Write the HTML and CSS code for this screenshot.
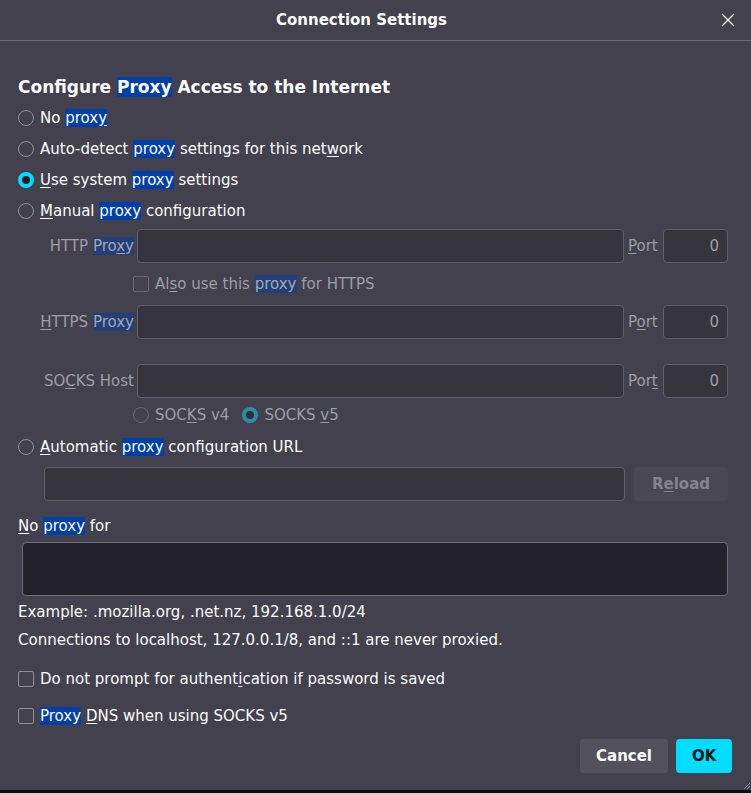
FILE: index.html
```html
<!DOCTYPE html>
<html lang="en">
<head>
<meta charset="utf-8">
<title>Connection Settings</title>
<link rel="stylesheet" href="styles.css">
</head>
<body>
<div class="dialog">
  <header class="titlebar">
    <h1 class="title">Connection Settings</h1>
    <button class="close" aria-label="Close">
      <svg width="14" height="14" viewBox="0 0 14 14"><path d="M1 1 L13 13 M13 1 L1 13" stroke="#fbfbfe" stroke-width="1.2" fill="none"/></svg>
    </button>
  </header>

  <main class="content">
    <h2 class="heading">Configure <mark class="hl">Proxy</mark> Access to the Internet</h2>

    <label class="radio-row"><span class="radio"></span><span>No <mark class="hl">prox<u>y</u></mark></span></label>
    <label class="radio-row"><span class="radio"></span><span>Auto-detect <mark class="hl">proxy</mark> settings for this net<u>w</u>ork</span></label>
    <label class="radio-row"><span class="radio checked"></span><span><u>U</u>se system <mark class="hl">proxy</mark> settings</span></label>
    <label class="radio-row"><span class="radio"></span><span><u>M</u>anual <mark class="hl">proxy</mark> configuration</span></label>

    <div class="manual disabled">
      <span class="field-label">HTTP <mark class="hl">Pro<u>x</u>y</mark></span>
      <span class="input"></span>
      <span class="port-label"><u>P</u>ort</span>
      <span class="input port">0</span>

      <label class="check-row span-sub"><span class="checkbox"></span><span>Al<u>s</u>o use this <mark class="hl">proxy</mark> for HTTPS</span></label>

      <span class="field-label"><u>H</u>TTPS <mark class="hl">Proxy</mark></span>
      <span class="input"></span>
      <span class="port-label">P<u>o</u>rt</span>
      <span class="input port">0</span>

      <span class="field-label socks-gap">SO<u>C</u>KS Host</span>
      <span class="input socks-gap"></span>
      <span class="port-label socks-gap">Por<u>t</u></span>
      <span class="input port socks-gap">0</span>

      <div class="socks-versions span-sub">
        <label class="inline-radio"><span class="radio"></span><span>SOC<u>K</u>S v4</span></label>
        <label class="inline-radio"><span class="radio checked"></span><span>SOCKS <u>v</u>5</span></label>
      </div>
    </div>

    <label class="radio-row"><span class="radio"></span><span><u>A</u>utomatic <mark class="hl">proxy</mark> configuration URL</span></label>

    <div class="autoconfig">
      <span class="input disabled-input"></span>
      <button class="btn reload" disabled>R<u>e</u>load</button>
    </div>

    <p class="noproxy-label"><u>N</u>o <mark class="hl">proxy</mark> for</p>
    <div class="textarea"></div>
    <p class="hint first">Example: .mozilla.org, .net.nz, 192.168.1.0/24</p>
    <p class="hint">Connections to localhost, 127.0.0.1/8, and ::1 are never proxied.</p>

    <label class="check-row auth"><span class="checkbox"></span><span>Do not prompt for authent<u>i</u>cation if password is saved</span></label>
    <label class="check-row dns"><span class="checkbox"></span><span><mark class="hl">Proxy</mark> <u>D</u>NS when using SOCKS v5</span></label>
  </main>

  <footer class="actions">
    <button class="btn cancel">Cancel</button>
    <button class="btn ok">OK</button>
  </footer>

  <svg class="grip" width="10" height="10" viewBox="0 0 10 10"><path d="M9 3 L3 9 M9 6 L6 9" stroke="#8f8f9d" stroke-width="1"/></svg>
</div>
</body>
</html>
```
FILE: styles.css
```css
* { box-sizing: border-box; }

html, body {
  margin: 0;
  padding: 0;
  background: #0c0c0d;
}

body {
  font-family: "DejaVu Sans", "Noto Sans", sans-serif;
  font-size: 15px;
  color: #fbfbfe;
}

.dialog {
  position: relative;
  width: 751px;
  height: 790px;
  background: #42414d;
  display: flex;
  flex-direction: column;
}

.titlebar {
  position: relative;
  height: 41px;
  border-bottom: 1px solid #6e6d78;
  display: flex;
  align-items: center;
  justify-content: center;
  padding-right: 28px;
}

.title {
  margin: 0;
  font-size: 15px;
  font-weight: bold;
  line-height: 20px;
}

.close {
  position: absolute;
  right: 15px;
  top: 12px;
  width: 16px;
  height: 16px;
  padding: 0;
  border: none;
  background: none;
  display: flex;
  align-items: center;
  justify-content: center;
}

.content {
  padding: 35px 23px 0 18px;
  flex: 1;
}

.heading {
  margin: 0 0 4px;
  font-size: 17px;
  line-height: 22px;
  font-weight: bold;
}

.hl {
  background: #0040a8;
  color: #fbfbfe;
}

u { text-underline-offset: 2px; }

.radio-row {
  display: flex;
  align-items: center;
  gap: 6px;
  height: 31px;
  line-height: 20px;
}

.radio {
  width: 16px;
  height: 16px;
  border-radius: 50%;
  border: 1px solid #8f8f9d;
  flex: none;
}

.radio.checked {
  border: 4px solid #00ddff;
  background: #1c1b22;
}

.manual {
  margin-top: 3px;
  display: grid;
  grid-template-columns: 115px 1fr 31px 65px;
  column-gap: 4px;
  align-items: center;
}

.disabled {
  color: #9e9ea5;
}

.disabled .hl {
  background: #21407a;
  color: #a6a6ad;
}

.disabled .radio {
  border-color: #6a6974;
}

.disabled .radio.checked {
  border-color: #2a8fa6;
  background: #2f2e37;
}

.disabled .checkbox {
  border-color: #6a6974;
}

.field-label {
  text-align: right;
  white-space: nowrap;
  justify-self: end;
  margin-right: -1px;
}

.port-label {
  white-space: nowrap;
}

.input {
  display: block;
  height: 34px;
  background: #36353e;
  border: 1px solid #5f5e69;
  border-radius: 4px;
}

.input.port {
  text-align: right;
  padding: 0 8px;
  line-height: 32px;
}

.socks-gap { margin-top: 25px; }

.span-sub {
  grid-column: 2 / 5;
}

.check-row {
  display: flex;
  align-items: center;
  gap: 6px;
  line-height: 20px;
}

.manual .check-row {
  height: 42px;
  margin-left: -4px;
}

.checkbox {
  width: 16px;
  height: 16px;
  border: 1px solid #8f8f9d;
  border-radius: 2px;
  flex: none;
}

.socks-versions {
  display: flex;
  align-items: center;
  gap: 13px;
  height: 33px;
  padding-top: 1px;
  margin-left: -4px;
}

.inline-radio {
  display: flex;
  align-items: center;
  gap: 6px;
}

.autoconfig {
  margin: 5px 0 0 26px;
  display: flex;
  gap: 9px;
}

.autoconfig .input { flex: 1; }

.btn {
  font-family: inherit;
  font-size: 15px;
  font-weight: bold;
  height: 34px;
  border: none;
  border-radius: 4px;
  padding: 0 16px;
}

.reload {
  width: 94px;
  background: #484753;
  color: #85848e;
}

.noproxy-label {
  margin: 14px 0 0;
  line-height: 22px;
}

.textarea {
  margin: 5px 0 0 4px;
  height: 54px;
  background: #23222b;
  border: 1px solid #6e6d78;
  border-radius: 4px;
}

.hint {
  margin: 6px 0 0;
  line-height: 22px;
}

.hint.first { margin-top: 5px; }

.auth {
  margin-top: 17px;
  height: 22px;
}

.dns {
  margin-top: 15px;
  height: 22px;
}

.actions {
  display: flex;
  justify-content: flex-end;
  gap: 8px;
  padding: 0 19px 17px 0;
}

.cancel {
  width: 88px;
  background: #52515c;
  color: #fbfbfe;
}

.ok {
  width: 56px;
  background: #00ddff;
  color: #15141a;
}

.grip {
  position: absolute;
  right: 0;
  bottom: 0;
}
```
